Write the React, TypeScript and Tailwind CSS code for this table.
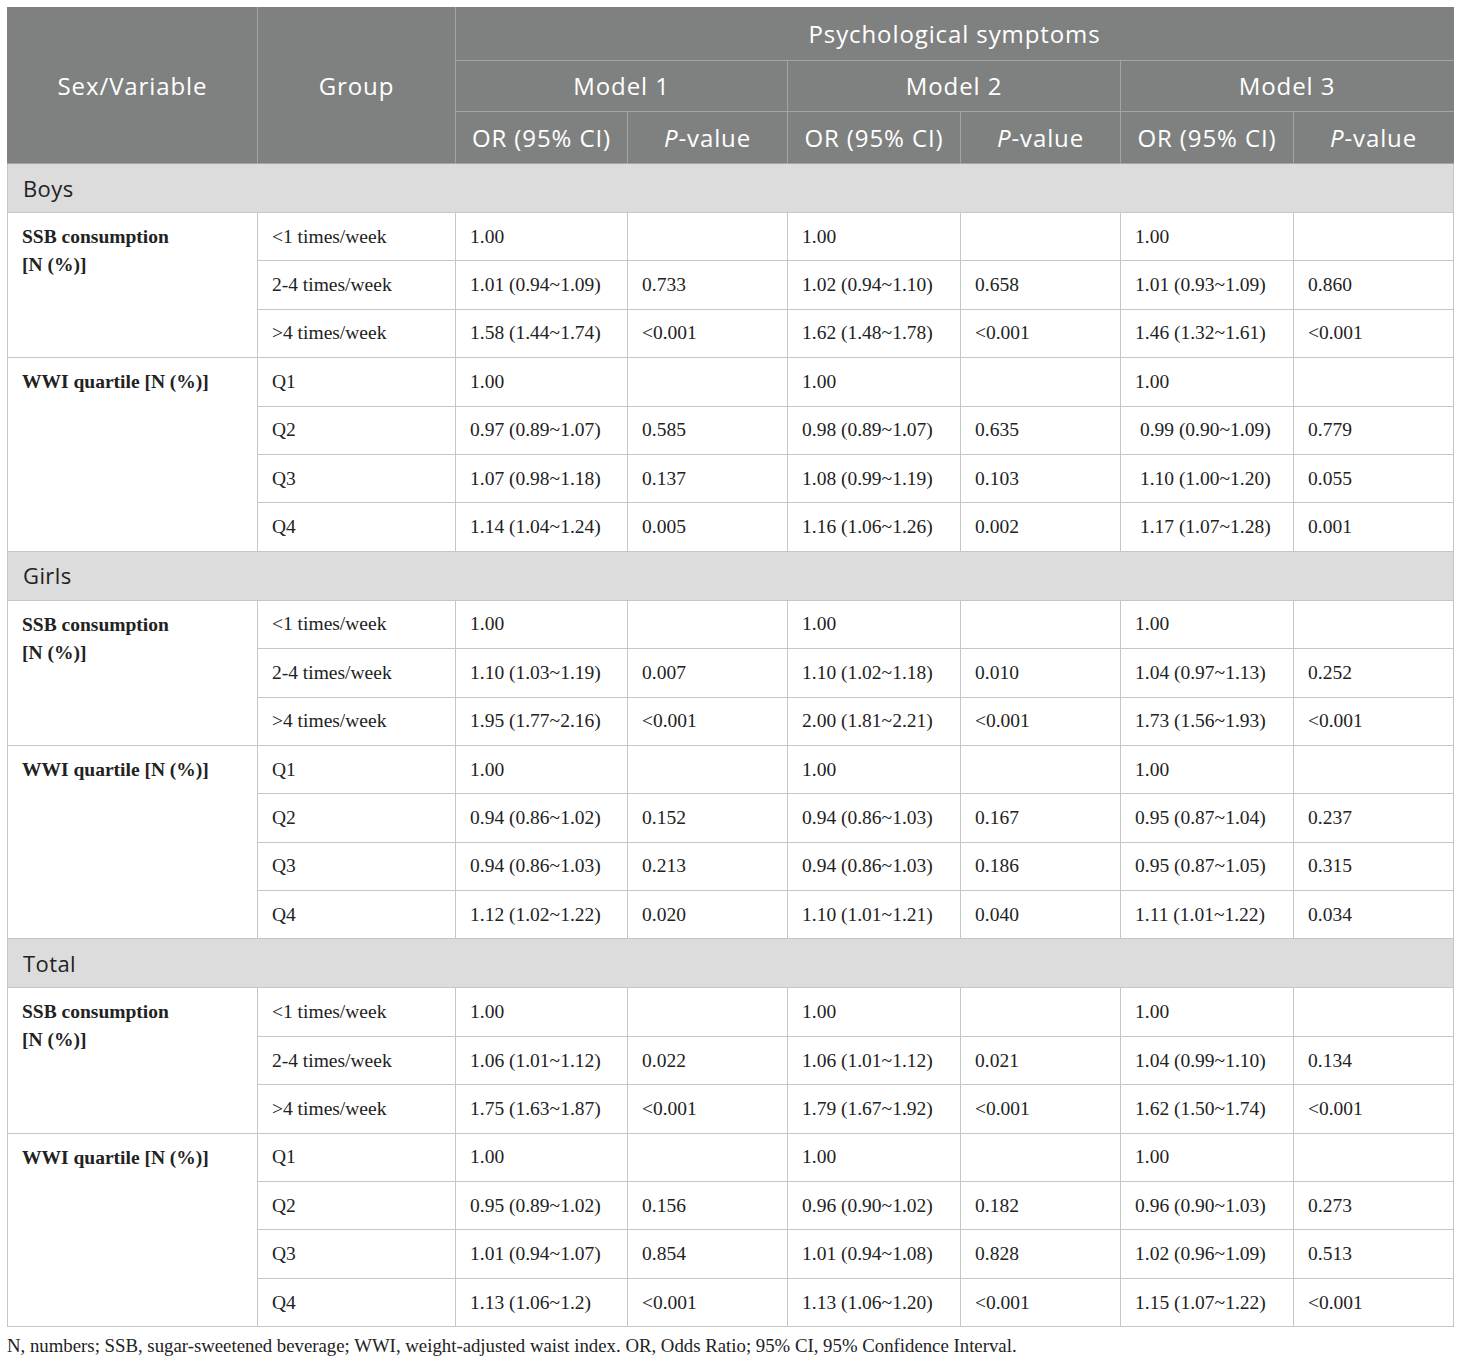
import React from 'react';

type Row = [string, string, string, string, string, string, string];
type Block = { label: React.ReactNode; rows: Row[] };
type Section = { title: string; blocks: Block[] };

const ssb = (
  <>
    <b>SSB consumption</b>
    <br />
    <b>[N (%)]</b>
  </>
);
const wwi = <b>WWI quartile [N (%)]</b>;

const sections: Section[] = [
  {
    title: 'Boys',
    blocks: [
      {
        label: ssb,
        rows: [
          ['<1 times/week', '1.00', '', '1.00', '', '1.00', ''],
          ['2-4 times/week', '1.01 (0.94~1.09)', '0.733', '1.02 (0.94~1.10)', '0.658', '1.01 (0.93~1.09)', '0.860'],
          ['>4 times/week', '1.58 (1.44~1.74)', '<0.001', '1.62 (1.48~1.78)', '<0.001', '1.46 (1.32~1.61)', '<0.001'],
        ],
      },
      {
        label: wwi,
        rows: [
          ['Q1', '1.00', '', '1.00', '', '1.00', ''],
          ['Q2', '0.97 (0.89~1.07)', '0.585', '0.98 (0.89~1.07)', '0.635', '\u00a00.99 (0.90~1.09)', '0.779'],
          ['Q3', '1.07 (0.98~1.18)', '0.137', '1.08 (0.99~1.19)', '0.103', '\u00a01.10 (1.00~1.20)', '0.055'],
          ['Q4', '1.14 (1.04~1.24)', '0.005', '1.16 (1.06~1.26)', '0.002', '\u00a01.17 (1.07~1.28)', '0.001'],
        ],
      },
    ],
  },
  {
    title: 'Girls',
    blocks: [
      {
        label: ssb,
        rows: [
          ['<1 times/week', '1.00', '', '1.00', '', '1.00', ''],
          ['2-4 times/week', '1.10 (1.03~1.19)', '0.007', '1.10 (1.02~1.18)', '0.010', '1.04 (0.97~1.13)', '0.252'],
          ['>4 times/week', '1.95 (1.77~2.16)', '<0.001', '2.00 (1.81~2.21)', '<0.001', '1.73 (1.56~1.93)', '<0.001'],
        ],
      },
      {
        label: wwi,
        rows: [
          ['Q1', '1.00', '', '1.00', '', '1.00', ''],
          ['Q2', '0.94 (0.86~1.02)', '0.152', '0.94 (0.86~1.03)', '0.167', '0.95 (0.87~1.04)', '0.237'],
          ['Q3', '0.94 (0.86~1.03)', '0.213', '0.94 (0.86~1.03)', '0.186', '0.95 (0.87~1.05)', '0.315'],
          ['Q4', '1.12 (1.02~1.22)', '0.020', '1.10 (1.01~1.21)', '0.040', '1.11 (1.01~1.22)', '0.034'],
        ],
      },
    ],
  },
  {
    title: 'Total',
    blocks: [
      {
        label: ssb,
        rows: [
          ['<1 times/week', '1.00', '', '1.00', '', '1.00', ''],
          ['2-4 times/week', '1.06 (1.01~1.12)', '0.022', '1.06 (1.01~1.12)', '0.021', '1.04 (0.99~1.10)', '0.134'],
          ['>4 times/week', '1.75 (1.63~1.87)', '<0.001', '1.79 (1.67~1.92)', '<0.001', '1.62 (1.50~1.74)', '<0.001'],
        ],
      },
      {
        label: wwi,
        rows: [
          ['Q1', '1.00', '', '1.00', '', '1.00', ''],
          ['Q2', '0.95 (0.89~1.02)', '0.156', '0.96 (0.90~1.02)', '0.182', '0.96 (0.90~1.03)', '0.273'],
          ['Q3', '1.01 (0.94~1.07)', '0.854', '1.01 (0.94~1.08)', '0.828', '1.02 (0.96~1.09)', '0.513'],
          ['Q4', '1.13 (1.06~1.2)', '<0.001', '1.13 (1.06~1.20)', '<0.001', '1.15 (1.07~1.22)', '<0.001'],
        ],
      },
    ],
  },
];

const th = 'border border-[#a3a5a4] font-normal text-white text-[24px] tracking-[0.9px] leading-[28px] align-middle text-center';
const td = 'border border-[#c6c6c6] px-[14px] h-[48.4px] align-middle text-[19.5px] leading-[28px] text-[#222]';

export default function App() {
  return (
    <div className="bg-white w-[1460px] min-h-[1364px] pt-[7px] pl-[7px]">
      <table className="border-collapse table-fixed w-[1446px] font-['Liberation_Serif',serif]">
        <colgroup>
          <col className="w-[250px]" />
          <col className="w-[198px]" />
          <col className="w-[172px]" />
          <col className="w-[160px]" />
          <col className="w-[173px]" />
          <col className="w-[160px]" />
          <col className="w-[173px]" />
          <col className="w-[160px]" />
        </colgroup>
        <thead className="bg-[#7f8180] font-['Open_Sans',sans-serif]">
          <tr className="h-[53px]">
            <th rowSpan={3} className={th + ' border-t-[#7f8180] border-l-[#7f8180]'}>Sex/Variable</th>
            <th rowSpan={3} className={th + ' border-t-[#7f8180]'}>Group</th>
            <th colSpan={6} className={th + ' border-t-[#7f8180] border-r-[#7f8180]'}>Psychological symptoms</th>
          </tr>
          <tr className="h-[51px]">
            <th colSpan={2} className={th}>Model 1</th>
            <th colSpan={2} className={th}>Model 2</th>
            <th colSpan={2} className={th + ' border-r-[#7f8180]'}>Model 3</th>
          </tr>
          <tr className="h-[52px]">
            {[0, 1, 2].map((i) => (
              <React.Fragment key={i}>
                <th className={th}>OR (95% CI)</th>
                <th className={th + (i === 2 ? ' border-r-[#7f8180]' : '')}>
                  <i>P</i>-value
                </th>
              </React.Fragment>
            ))}
          </tr>
        </thead>
        <tbody>
          {sections.map((s) => (
            <React.Fragment key={s.title}>
              <tr className="h-[49px] bg-[#dcdcdc]">
                <td
                  colSpan={8}
                  className="border border-[#c6c6c6] px-[15px] text-[22px] tracking-[0.4px] text-[#222] font-['Open_Sans',sans-serif] align-middle"
                >
                  {s.title}
                </td>
              </tr>
              {s.blocks.map((b, bi) =>
                b.rows.map((r, ri) => (
                  <tr key={bi + '-' + ri}>
                    {ri === 0 && (
                      <td rowSpan={b.rows.length} className={td + ' align-top py-[10px]'}>
                        {b.label}
                      </td>
                    )}
                    {r.map((c, ci) => (
                      <td key={ci} className={td}>
                        {c}
                      </td>
                    ))}
                  </tr>
                ))
              )}
            </React.Fragment>
          ))}
        </tbody>
      </table>
      <p className="font-['Liberation_Serif',serif] text-[18.8px] text-[#222] mt-[7px] leading-[24px]">
        N, numbers; SSB, sugar-sweetened beverage; WWI, weight-adjusted waist index. OR, Odds Ratio; 95% CI, 95% Confidence
        Interval.
      </p>
    </div>
  );
}
